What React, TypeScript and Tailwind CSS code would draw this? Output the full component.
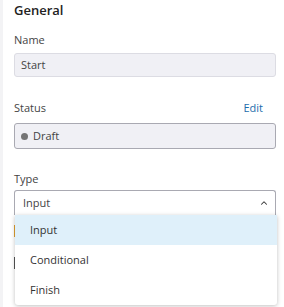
import { ChevronUp } from "lucide-react"

const options = ["Input", "Conditional", "Finish"]

export default function App() {
  return (
    <div className="flex h-[307px] w-[284px] overflow-hidden bg-white font-['Open_Sans',sans-serif] text-[11px] text-[#333]">
      <div className="w-[3px] shrink-0 bg-[#f3f3f5]" />
      <div className="flex w-[273px] flex-col pl-[11px] pt-[1px]">
        <h2 className="text-[13px] font-semibold leading-[18px] text-[#222]">General</h2>

        <div className="mt-[13px] leading-[16px] text-[#444]">Name</div>
        <div className="mt-[5px] flex h-[24px] items-center rounded-[3px] border border-[#dcdce3] bg-[#f0f0f5] px-[6px] text-[#444]">
          Start
        </div>

        <div className="mt-[23px] flex items-center justify-between leading-[16px] text-[#444]">
          <span>Status</span>
          <span className="pr-[13px] text-[#1b6cab]">Edit</span>
        </div>
        <div className="mt-[7px] flex h-[26px] items-center gap-[5px] rounded-[3px] border border-[#a9a9b2] bg-[#f0f0f5] px-[6px] text-[#444]">
          <span className="h-[7px] w-[7px] rounded-full bg-[#757575]" />
          Draft
        </div>

        <div className="mt-[22px] leading-[16px] text-[#444]">Type</div>
        <div className="relative mt-[3px]">
          <div className="flex h-[25px] items-center justify-between rounded-t-[3px] border border-b-0 border-[#a9a9b2] bg-white pl-[8px] pr-[6px] text-[#444]">
            <span>Input</span>
            <ChevronUp className="h-[10px] w-[10px] text-[#333]" strokeWidth={2.5} />
          </div>
          <div className="absolute left-[1px] right-[-1px] top-[25px] z-10 rounded-b-[3px] bg-white shadow-[0_1px_4px_rgba(0,0,0,0.25)]">
            {options.map((o, i) => (
              <div
                key={o}
                className={`flex h-[30px] items-center pl-[15px] text-[#333] ${i === 0 ? "bg-[#dff0fa]" : ""}`}
              >
                {o}
              </div>
            ))}
          </div>
          <div className="mt-[10px] flex flex-col gap-[20px]">
            <div className="h-[12px] w-[10px] bg-[#e0a030]" />
            <div className="h-[12px] w-[10px] bg-[#555]" />
          </div>
        </div>
      </div>
    </div>
  )
}
